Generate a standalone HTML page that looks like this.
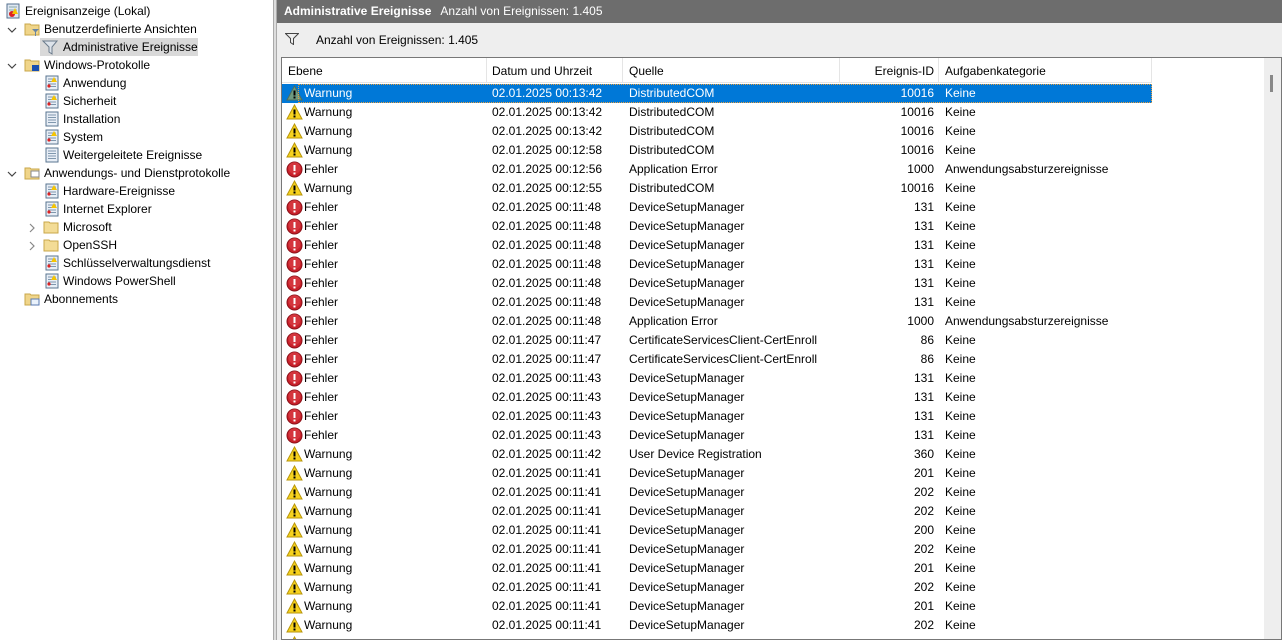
<!DOCTYPE html>
<html><head><meta charset="utf-8"><style>
*{margin:0;padding:0;box-sizing:border-box}
body{width:1282px;height:640px;overflow:hidden;background:#fff;font-family:"Segoe UI","Liberation Sans",sans-serif;font-size:12px;color:#000;position:relative}
#left{position:absolute;left:0;top:0;width:273px;height:640px;background:#fff}
#sep{position:absolute;left:273px;top:0;width:4px;height:640px;background:#ddd;border-left:1px solid #aaa;border-right:1px solid #aaa}
.ti{position:absolute;height:18px;line-height:18px;white-space:nowrap}
.ic{position:absolute;width:16px;height:16px}
.chev{position:absolute;width:10px;height:10px}
#hdr{position:absolute;left:277px;top:0;right:0;height:23px;background:#6d6d6d;color:#fff;line-height:23px;padding-left:7px}
#hdr b{margin-right:9px}
#panel{position:absolute;left:277px;top:23px;right:0;bottom:0;background:#eeeeee}
#frame{position:absolute;left:281px;top:57px;width:1001px;height:583px;border:1px solid #777;background:#fff;overflow:hidden}
.row{position:absolute;left:0;height:19px;line-height:19px;width:870px}
.c{position:absolute;top:0;white-space:nowrap}
#sb{position:absolute;right:0;top:0;width:17px;height:100%;background:#eeeeee}
</style></head><body>
<div id="left">
<svg class="ic" style="left:5px;top:3px" viewBox="0 0 16 16"><rect x="2" y="1" width="12" height="14" fill="#dfe7f2" stroke="#56708f"/><path d="M4 4h8M4 7h8M4 10h8" stroke="#8aa"/><circle cx="7" cy="11" r="3" fill="#d22"/><path d="M10 5l3 6h-6z" fill="#f5c400"/></svg>
<div class="ti" style="left:25px;top:2px">Ereignisanzeige (Lokal)</div>
<svg class="chev" style="left:7px;top:25px" viewBox="0 0 10 10"><path d="M1 3l4 4 4-4" fill="none" stroke="#444" stroke-width="1.2"/></svg>
<svg class="ic" style="left:24px;top:21px" viewBox="0 0 16 16"><path d="M1 3h5l1 1h8v10H1z" fill="#f0d58a" stroke="#c9a74a"/><path d="M8 8h7l-3 3v4h-1v-4z" fill="#6a86a3"/></svg>
<div class="ti" style="left:44px;top:20px">Benutzerdefinierte Ansichten</div>
<div style="position:absolute;left:40px;top:38px;width:158px;height:18px;background:#d9d9d9"></div>
<svg class="ic" style="left:42px;top:39px" viewBox="0 0 16 16"><path d="M1 2h14l-5 6v7l-3-2V8z" fill="#dde3ea" stroke="#6b7b8c"/></svg>
<div class="ti" style="left:63px;top:38px">Administrative Ereignisse</div>
<svg class="chev" style="left:7px;top:61px" viewBox="0 0 10 10"><path d="M1 3l4 4 4-4" fill="none" stroke="#444" stroke-width="1.2"/></svg>
<svg class="ic" style="left:24px;top:57px" viewBox="0 0 16 16"><path d="M1 3h5l1 1h8v10H1z" fill="#f0d58a" stroke="#c9a74a"/><rect x="8" y="8" width="7" height="6" fill="#1a4fb0"/></svg>
<div class="ti" style="left:44px;top:56px">Windows-Protokolle</div>
<div id="lg"></div>
</div>
<div id="sep"></div>
<div id="hdr"><b>Administrative Ereignisse</b>Anzahl von Ereignissen: 1.405</div>
<div id="panel">
<svg style="position:absolute;left:8px;top:10px" width="14" height="12" viewBox="0 0 14 12"><path d="M0.5 0.5h13l-5 5v6l-3-2v-4z" fill="none" stroke="#444"/></svg>
<div style="position:absolute;left:39px;top:10px">Anzahl von Ereignissen: 1.405</div>
</div>
<div id="frame">
<div style="position:absolute;left:0;top:0;width:870px;height:25px;border-bottom:1px solid #e5e5e5"></div>
<div id="hd"></div>
<div id="rows"></div>
<div id="sb"><div style="position:absolute;left:6px;top:17px;width:3px;height:17px;background:#888"></div></div>
</div>
<script>
var L=document.getElementById('lg'),h='';
var logIcon=function(x,y,w){return '<svg class="ic" style="left:'+x+'px;top:'+y+'px" viewBox="0 0 16 16"><rect x="2" y="1" width="12" height="14" fill="#e8eef6" stroke="#5a7590"/><path d="M4 4h8M4 6.5h8M4 9h8M4 11.5h8" stroke="#7f97ad"/>'+(w?'<path d="M10 2l3 5h-6z" fill="#f5c400"/><circle cx="5" cy="11" r="1.6" fill="#d22"/>':'')+'</svg>'};
var items=[[44,74,'Anwendung',1],[44,92,'Sicherheit',1],[44,110,'Installation',0],[44,128,'System',1],[44,146,'Weitergeleitete Ereignisse',0]];
items.forEach(function(i){h+=logIcon(i[0],i[1]+1,i[3])+'<div class="ti" style="left:63px;top:'+i[1]+'px">'+i[2]+'</div>'});
h+='<svg class="chev" style="left:7px;top:169px" viewBox="0 0 10 10"><path d="M1 3l4 4 4-4" fill="none" stroke="#444" stroke-width="1.2"/></svg><svg class="ic" style="left:24px;top:165px" viewBox="0 0 16 16"><path d="M1 3h5l1 1h8v10H1z" fill="#f0d58a" stroke="#c9a74a"/><rect x="7" y="6" width="8" height="6" fill="#fff" stroke="#888"/></svg><div class="ti" style="left:44px;top:164px">Anwendungs- und Dienstprotokolle</div>';
[[182,'Hardware-Ereignisse',1],[200,'Internet Explorer',1],[218,'Microsoft',2],[236,'OpenSSH',2],[254,'Schlüsselverwaltungsdienst',1],[272,'Windows PowerShell',1]].forEach(function(i){
 if(i[2]==2)h+='<svg class="chev" style="left:27px;top:'+(i[0]+5)+'px" viewBox="0 0 10 10"><path d="M3 1l4 4-4 4" fill="none" stroke="#888" stroke-width="1.2"/></svg><svg class="ic" style="left:43px;top:'+(i[0]+1)+'px" viewBox="0 0 16 16"><path d="M1 3h5l1 1h8v10H1z" fill="#f3dc96" stroke="#c9a74a"/></svg>';
 else h+=logIcon(44,i[0]+1,1);
 h+='<div class="ti" style="left:63px;top:'+i[0]+'px">'+i[1]+'</div>'});
h+='<svg class="ic" style="left:24px;top:291px" viewBox="0 0 16 16"><path d="M1 3h5l1 1h8v10H1z" fill="#f0d58a" stroke="#c9a74a"/><rect x="7" y="8" width="8" height="6" fill="#eaf2fb" stroke="#5a7ab0"/></svg><div class="ti" style="left:44px;top:290px">Abonnements</div>';
L.outerHTML=h;
var hd='',cols=[[6,'Ebene'],[210,'Datum und Uhrzeit'],[347,'Quelle'],[594,'Ereignis-ID'],[663,'Aufgabenkategorie']];
cols.forEach(function(c,i){hd+='<div class="c" style="'+(i==3?'left:560px;width:92px;text-align:right;':'left:'+c[0]+'px;')+'top:6px">'+c[1]+'</div>'});
[204,340,557,656,869].forEach(function(x){hd+='<div style="position:absolute;left:'+x+'px;top:0;width:1px;height:25px;background:#e5e5e5"></div>'});
document.getElementById('hd').outerHTML=hd;
var W='Warnung',F='Fehler',D='DistributedCOM',M='DeviceSetupManager',A='Application Error',C='CertificateServicesClient-CertEnroll',K='Keine',AA='Anwendungsabsturzereignisse';
var data=[[W,'00:13:42',D,10016,K],[W,'00:13:42',D,10016,K],[W,'00:13:42',D,10016,K],[W,'00:12:58',D,10016,K],[F,'00:12:56',A,1000,AA],[W,'00:12:55',D,10016,K],
[F,'00:11:48',M,131,K],[F,'00:11:48',M,131,K],[F,'00:11:48',M,131,K],[F,'00:11:48',M,131,K],[F,'00:11:48',M,131,K],[F,'00:11:48',M,131,K],[F,'00:11:48',A,1000,AA],
[F,'00:11:47',C,86,K],[F,'00:11:47',C,86,K],[F,'00:11:43',M,131,K],[F,'00:11:43',M,131,K],[F,'00:11:43',M,131,K],[F,'00:11:43',M,131,K],
[W,'00:11:42','User Device Registration',360,K],[W,'00:11:41',M,201,K],[W,'00:11:41',M,202,K],[W,'00:11:41',M,202,K],[W,'00:11:41',M,200,K],[W,'00:11:41',M,202,K],[W,'00:11:41',M,201,K],[W,'00:11:41',M,202,K],[W,'00:11:41',M,201,K],[W,'00:11:41',M,202,K],[W,'00:11:41',M,202,K]];
var r='';
data.forEach(function(d,i){var y=26+i*19,sel=i==0;
 var ico=d[0]==W?'<svg class="c" style="left:4px;top:1px" width="17" height="16" viewBox="0 0 17 16"><path d="M8.5 1L16 15H1z" fill="'+(sel?'#6f9a80':'#f7d21e')+'" stroke="'+(sel?'#4e6e5c':'#b8960a')+'"/><path d="M8.5 5.5v5" stroke="#000" stroke-width="2"/><rect x="7.5" y="11.5" width="2" height="2" fill="#000"/></svg>'
 :'<svg class="c" style="left:4px;top:1px" width="17" height="17" viewBox="0 0 17 17"><circle cx="8.5" cy="8.5" r="7.5" fill="#c8202a" stroke="#8a1018"/><circle cx="8.5" cy="7" r="6" fill="#e04a50" opacity=".5"/><path d="M8.5 4v6" stroke="#fff" stroke-width="2"/><rect x="7.5" y="11.5" width="2" height="2" fill="#fff"/></svg>';
 r+='<div class="row" style="top:'+y+'px;'+(sel?'background:#0078d7;color:#fff;':'')+'">'+ico+
 (sel?'<div style="position:absolute;left:16px;top:0;width:854px;height:19px;border:1px dotted #e8a040"></div>':'')+
 '<div class="c" style="left:22px">'+d[0]+'</div><div class="c" style="left:210px">02.01.2025 '+d[1]+'</div><div class="c" style="left:347px">'+d[2]+'</div><div class="c" style="left:560px;width:92px;text-align:right">'+d[3]+'</div><div class="c" style="left:663px">'+d[4]+'</div></div>'});
document.getElementById('rows').outerHTML=r;
</script>
</body></html>
